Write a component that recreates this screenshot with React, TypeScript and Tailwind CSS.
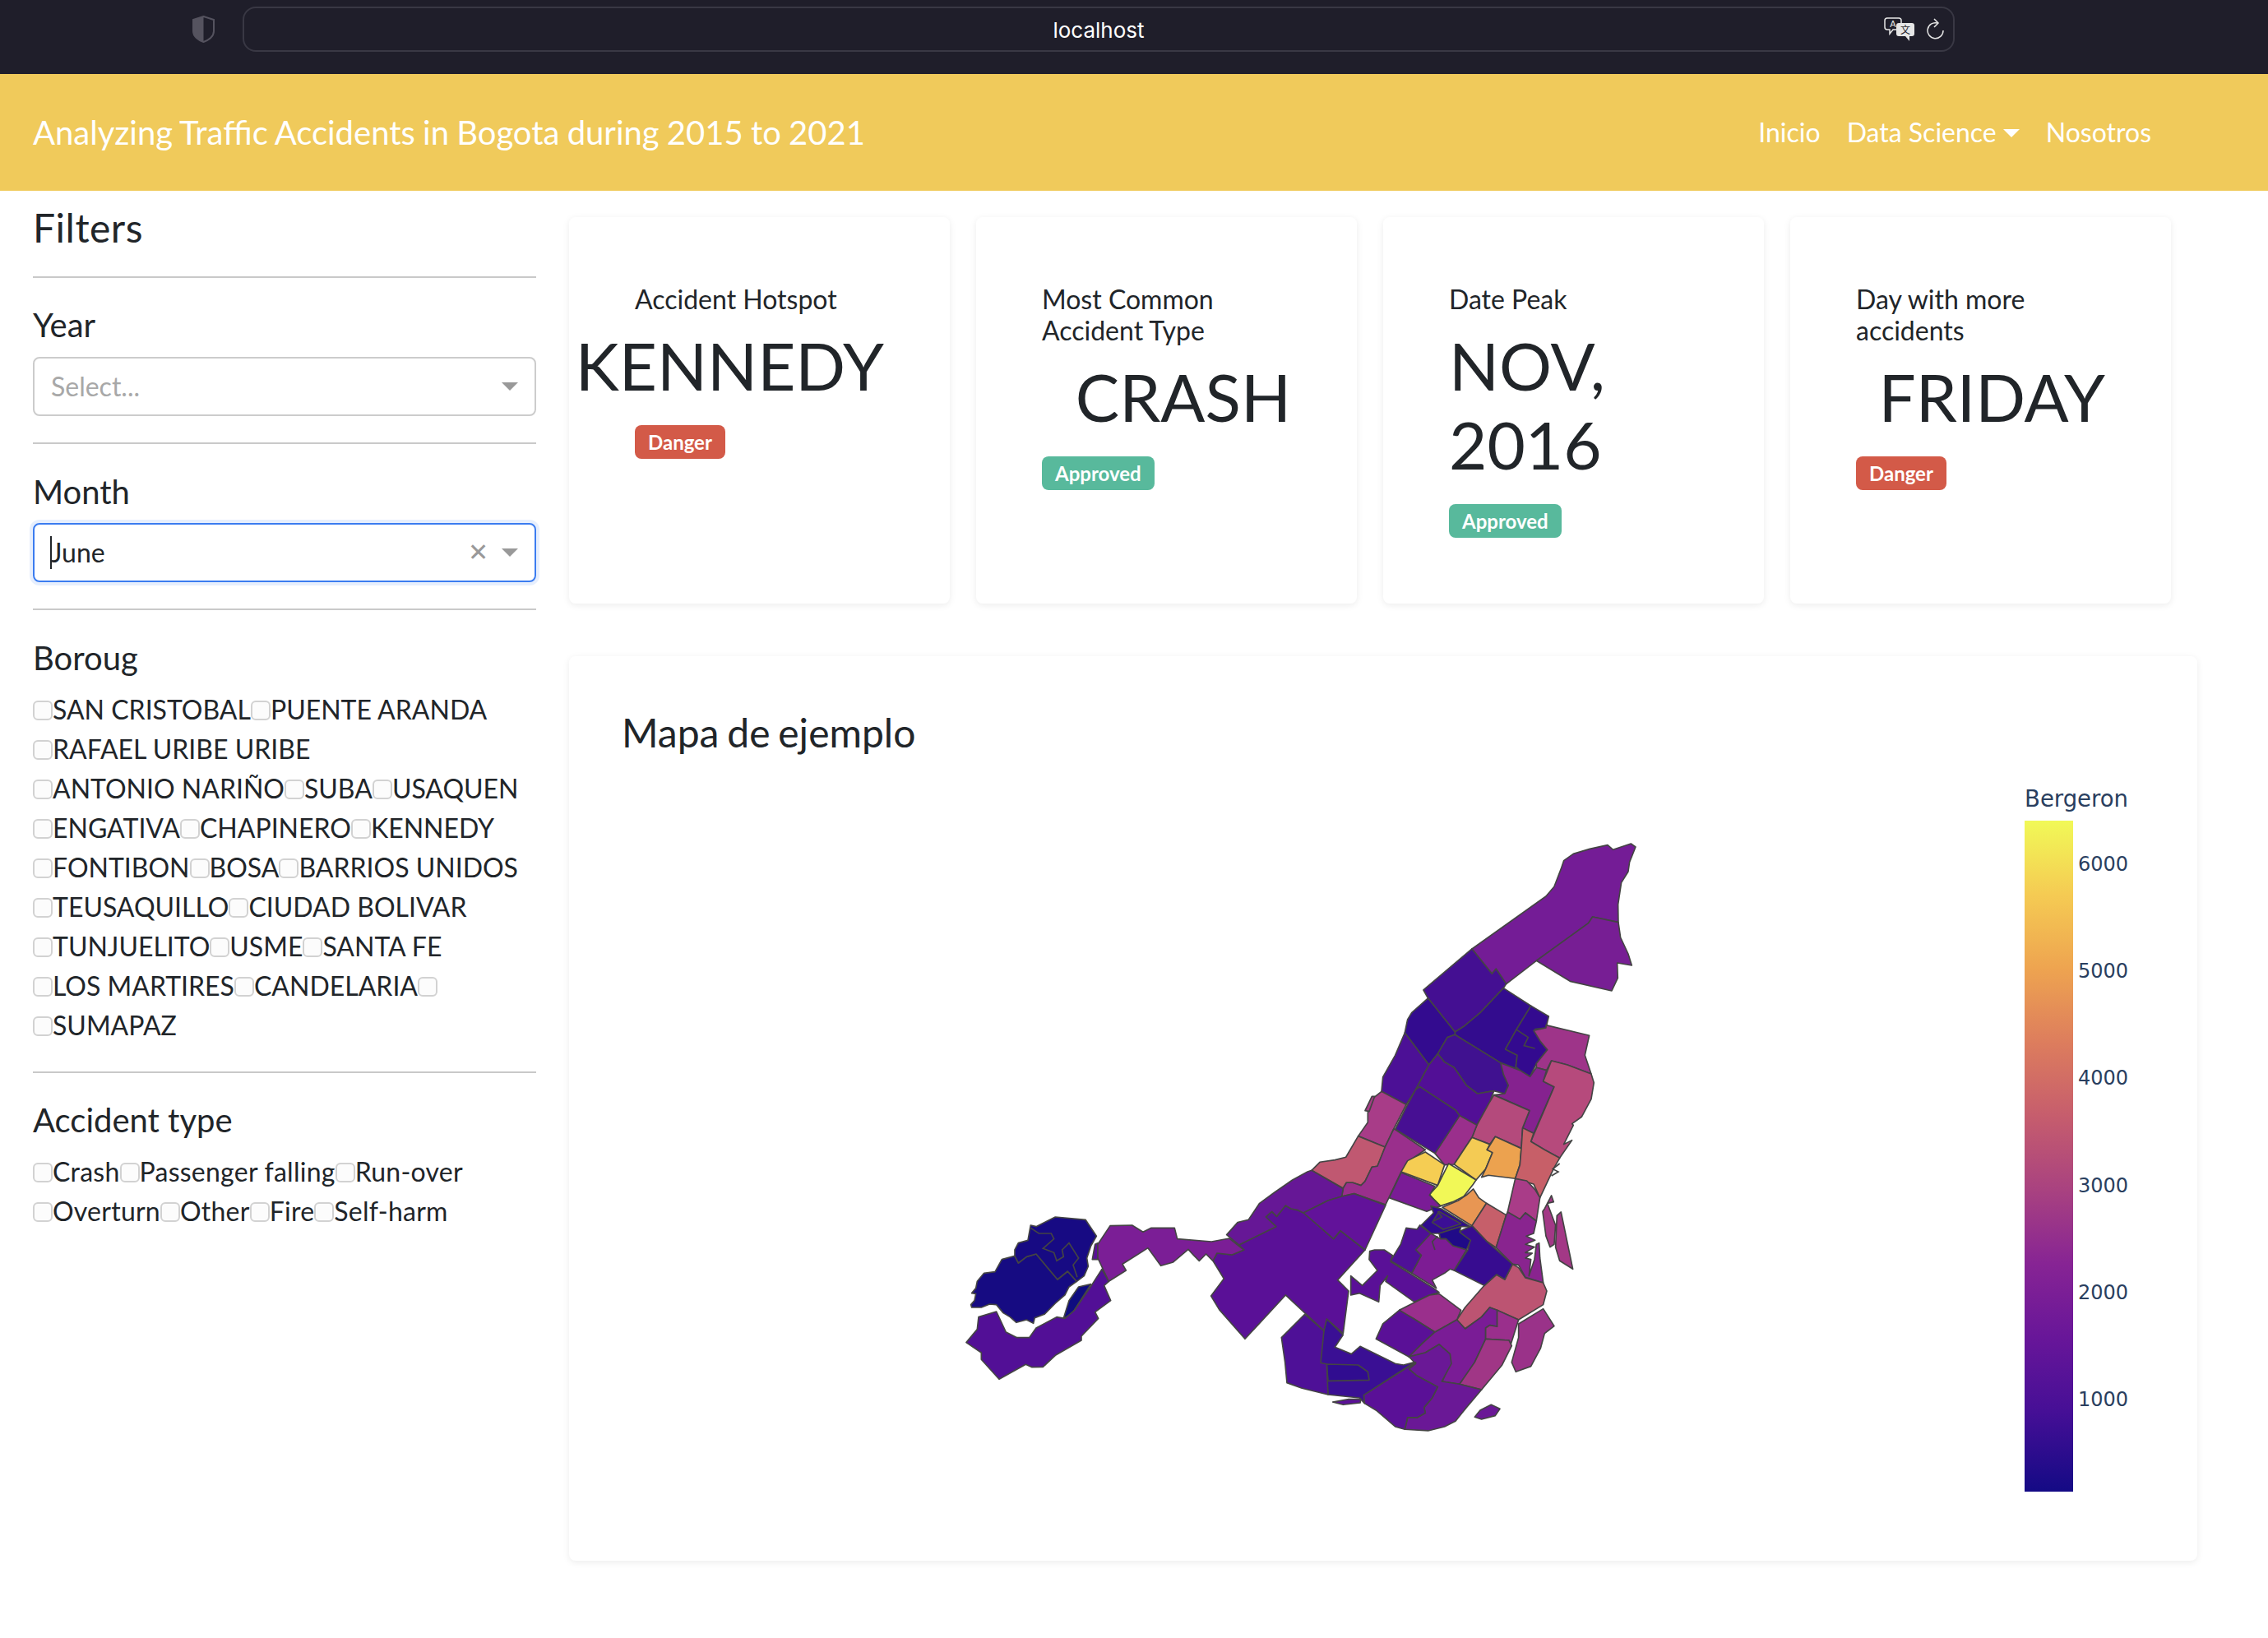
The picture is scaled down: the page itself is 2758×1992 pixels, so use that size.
const BOROUGHS = [
  "SAN CRISTOBAL", "PUENTE ARANDA", "RAFAEL URIBE URIBE", "ANTONIO NARIÑO", "SUBA", "USAQUEN",
  "ENGATIVA", "CHAPINERO", "KENNEDY", "FONTIBON", "BOSA", "BARRIOS UNIDOS", "TEUSAQUILLO",
  "CIUDAD BOLIVAR", "TUNJUELITO", "USME", "SANTA FE", "LOS MARTIRES", "CANDELARIA", "", "SUMAPAZ",
];
const ACCIDENT_TYPES = ["Crash", "Passenger falling", "Run-over", "Overturn", "Other", "Fire", "Self-harm"];

type Shape = [string, string];

// points read off the crops of the upper map (origin 1500,1000 at 3x)
const NORTH: Shape[] = [
  ["#741c96", "870,462 1140,270 1170,235 1195,170 1205,140 1240,115 1300,97 1365,83 1385,100 1450,78 1467,90 1445,145 1440,180 1415,220 1403,300 1404,365 1310,345 1295,368 1105,505 995,590 958,535 943,553"],
  ["#771e94", "1105,505 1295,368 1310,345 1404,365 1412,420 1440,480 1453,522 1400,513 1402,568 1380,615 1228,580"],
  ["#440f92", "693,612 870,462 943,553 958,535 995,590 985,605 900,695 840,745 808,765 710,642"],
  ["#330c8e", "985,605 1085,670 1030,760 992,828 1035,850 1030,892 1045,905 975,878 808,775 808,765 840,745 900,695"],
  ["#330a8f", "1085,670 1150,708 1140,750 1100,755 1105,775 1120,800 1145,830 1105,880 1082,928 1045,905 1030,892 1035,850 992,828 1030,760"],
  ["#9e3489", "1140,740 1298,778 1282,850 1305,918 1218,885 1160,870 1142,905 1105,895 1105,880 1145,830 1120,800 1095,760 1140,750"],
  ["#330b8f", "710,642 808,765 808,775 780,785 745,845 713,885 625,768 635,720 650,695"],
  ["#4c1096", "625,768 713,885 665,975 630,1030 540,982 545,930 590,850"],
  ["#401190", "745,845 780,785 808,775 975,878 985,920 1003,960 990,990 950,980 890,990 850,960 805,895 770,875"],
  ["#520f96", "745,845 770,875 805,895 850,960 890,990 950,980 935,1020 888,1105 825,1070 810,1050 680,965 665,975 713,885"],
  ["#85228f", "975,878 1045,905 1082,928 1105,895 1142,905 1130,945 1170,965 1095,1135 1055,1115 1080,1052 950,995 990,990 1003,960 985,920"],
  ["#b64a7c", "1160,870 1218,885 1305,918 1315,950 1305,1010 1270,1075 1235,1100 1240,1105 1205,1175 1235,1160 1190,1225 1135,1195 1085,1165 1170,965 1130,945"],
  ["#b44a7c", "950,995 1080,1052 1055,1115 1050,1190 955,1147 935,1175 870,1150 888,1105 935,1020"],
  ["#9a2f8c", "825,1070 888,1105 870,1150 805,1248 770,1250 735,1208"],
  ["#470f93", "680,965 810,1050 825,1070 735,1208 590,1120 630,1040 665,975"],
  ["#a83c88", "540,982 630,1030 585,1118 553,1185 455,1145 490,1095 490,1060 505,1010"],
  ["#a83c88", "480,1052 505,1000 515,1000 495,1055"],
  ["#c05871", "455,1145 553,1185 525,1255 505,1258 480,1310 465,1325 435,1315 412,1315 400,1335 285,1270 315,1240 370,1232 410,1222"],
  ["#9a2f8c", "585,1118 700,1195 660,1222 612,1275 555,1395 440,1355 395,1365 400,1335 412,1315 435,1315 465,1325 480,1310 505,1258 525,1255 553,1185"],
  ["#f5cd53", "700,1203 770,1250 745,1325 612,1275 635,1235 660,1222"],
  ["#f4cb54", "870,1150 935,1175 925,1195 945,1205 920,1265 885,1305 805,1248"],
  ["#eca24f", "955,1147 1050,1190 1045,1250 1028,1300 930,1288 905,1295 920,1265 945,1205 925,1195"],
  ["#c75f68", "1055,1115 1095,1135 1085,1165 1135,1195 1190,1225 1170,1260 1118,1370 1095,1320 1028,1300 1045,1250 1050,1190"],
  ["#f1f857", "785,1245 885,1305 875,1320 840,1365 800,1385 755,1400 735,1380 715,1358 745,1325"],
];

// lower map (origin 1500,1300 at 3x)
const SOUTH: Shape[] = [
  ["#7a1c96", "612,378 735,428 715,460 755,500 705,520 568,470"],
  ["#e89653", "875,438 895,470 923,490 870,572 762,505 820,480 850,460"],
  ["#c65f6a", "923,490 995,533 958,652 925,630 870,572"],
  ["#a93c88", "1028,400 1070,408 1100,440 1118,470 1105,555 1065,525 1045,548 1000,522"],
  ["#89248f", "1000,522 1045,548 1065,525 1105,555 1095,600 1068,610 1100,625 1065,640 1098,650 1065,670 1090,672 1065,690 1085,695 1078,755 1098,695 1105,640 1115,635 1118,690 1130,780 1065,760 1040,715 1018,712 958,652 995,533"],
  ["#bc5472", "1018,712 1040,725 1065,762 1130,780 1143,810 1130,860 1040,915 960,880 935,870 905,905 845,948 815,915 845,870 915,790 960,750 990,768"],
  ["#370c90", "870,572 925,630 1018,712 990,768 960,750 915,790 805,735 855,660 862,630 825,600 830,590"],
  ["#2f0b8e", "720,500 758,510 865,575 830,575 750,600 720,600 685,570 730,525"],
  ["#3b0f95", "725,560 750,520 830,565 765,585"],
  ["#200a88", "750,600 830,575 825,595 865,625 850,660 800,645 775,620 755,620"],
  ["#7d1c94", "720,600 755,620 775,620 800,645 850,660 805,735 790,730 770,745 725,770 740,800 650,745 685,680 665,660 700,595"],
  ["#4f1097", "630,580 670,585 680,570 720,600 665,660 685,680 650,745 573,700 610,640 620,610"],
  ["#5a1097", "497,665 515,660 550,660 580,680 573,703 730,800 750,815 715,825 660,850 555,775 562,755 535,790 530,850 460,818 428,825 428,755 470,790 525,735 495,695"],
  ["#9a2f8c", "605,880 660,852 715,825 750,820 830,880 815,915 735,960 655,910 625,895"],
  ["#5a1097", "605,880 655,910 735,960 690,1000 640,1050 520,985 545,930"],
  ["#7a1c96", "735,960 815,915 845,948 905,905 935,870 962,880 962,940 935,935 920,945 920,985 880,1070 825,1150 762,1140 790,1075 790,1040 750,1005 700,1035 640,1050 690,1000"],
  ["#9a2f8c", "962,880 1040,915 1010,1010 1005,990 920,985 920,945 935,935 962,940"],
  ["#a03686", "920,985 1005,990 1015,1010 980,1080 905,1170 825,1150 880,1070"],
  ["#9a3289", "1130,875 1170,938 1135,965 1120,1020 1085,1085 1030,1105 1015,1070 1040,980 1040,930"],
  ["#a33886", "1135,510 1160,462 1168,485 1145,490 1175,570 1170,640 1155,650 1140,610 1128,520"],
  ["#a33886", "1180,535 1195,522 1238,730 1190,700 1175,650"],
  ["#6a1896", "880,1270 900,1245 940,1225 972,1240 955,1265 905,1278"],
  ["#6a1896", "760,1140 825,1150 905,1170 850,1235 810,1285 770,1305 710,1320 625,1315 635,1272 670,1272 700,1255 695,1235 725,1200 745,1160 670,1120 640,1095 665,1075 640,1050 700,1035 750,1005 790,1040 795,1075"],
  ["#5a1097", "665,1070 640,1095 670,1120 745,1160 725,1200 695,1235 700,1255 670,1272 635,1272 625,1315 590,1305 520,1245 478,1220 475,1190"],
  ["#3a0f94", "340,912 400,970 370,1015 430,1040 462,1012 590,1075 620,1080 660,1070 475,1190 478,1220 460,1200 345,1188 340,1135 318,1072 318,1000"],
  ["#300c90", "340,1077 455,1080 490,1105 495,1135 345,1138"],
  ["#4e1097", "260,895 330,955 318,1072 340,1077 345,1188 250,1165 195,1145 188,1070 175,980"],
  ["#5a1097", "362,1215 420,1205 465,1205 462,1218 400,1225"],
  ["#5a1097", "155,575 118,540 140,520 158,538 190,498 210,510 235,515 258,525 365,620 390,590 480,660 380,770 420,810 400,965 340,912 330,955 190,825 42,985 -52,878 -82,828 -35,765 -75,700 -60,672 -5,678 38,660 20,642"],
  ["#661796", "285,370 400,437 395,465 345,480 255,525 235,515 210,510 190,498 158,538 140,520 118,540 155,575 20,642 -25,605 15,560 55,550 95,490 150,450 215,405 270,375"],
  ["#62129a", "255,525 345,480 395,465 440,455 555,497 480,660 390,590 365,620"],
];

const SOUTH_LINES = [
  "1190,345 1165,365 1185,375 1160,390",
  "735,660 725,630 745,610",
  "745,520 760,540 730,555",
];

// west end of the map (origin 1160,1450 at 3x)
const WEST: Shape[] = [
  ["#160b82", "65,420 62,410 75,395 80,370 65,368 80,350 85,325 110,295 150,290 175,245 222,232 235,258 265,235 300,225 378,318 415,288 448,325 420,345 405,375 370,405 330,445 295,458 290,478 265,465 228,475 205,455 180,440 155,410 130,408 100,420"],
  ["#170a83", "222,232 222,210 235,185 270,175 280,120 300,125 340,105 370,90 480,100 520,160 500,195 485,240 490,270 475,305 448,325 415,288 378,318 300,225 265,235 235,258"],
  ["#0f0c80", "500,335 430,445 400,460 420,395 455,345"],
  ["#520f96", "45,548 85,500 90,455 155,435 190,510 230,530 275,530 300,495 375,455 405,460 440,430 505,335 540,280 565,325 548,340 572,395 515,437 527,460 465,525 465,540 370,595 325,637 285,638 262,628 165,682 100,610 100,585"],
  ["#5a1097", "505,245 515,190 525,185 525,245"],
  ["#7b1e96", "525,190 570,122 650,120 690,145 720,130 805,130 815,170 940,180 1005,168 1058,210 1015,228 960,222 945,250 920,225 895,250 875,230 855,208 800,255 755,268 708,203 615,262 628,285 565,325 525,240"],
];

const TICKS: [string, number][] = [
  ["6000", 1050],
  ["5000", 1180],
  ["4000", 1310],
  ["3000", 1441],
  ["2000", 1571],
  ["1000", 1701],
];

function Polys({ shapes, transform }: { shapes: Shape[]; transform: string }) {
  return (
    <g transform={transform} stroke="#444444" strokeWidth={5} strokeLinejoin="round" fill="none">
      {shapes.map(([fill, points], i) => (
        <polygon key={i} fill={fill} points={points} />
      ))}
    </g>
  );
}

function MapChart() {
  return (
    <svg className="mt-[10px] block h-[940px] w-[1864px]" viewBox="756 930 1864 940">
      <defs>
        <linearGradient id="plasma" x1="0" y1="0" x2="0" y2="1">
          <stop offset="0" stopColor="#f1f957" />
          <stop offset="0.11" stopColor="#f5cb53" />
          <stop offset="0.22" stopColor="#eea450" />
          <stop offset="0.33" stopColor="#dd7d5d" />
          <stop offset="0.44" stopColor="#c65d6d" />
          <stop offset="0.55" stopColor="#a94280" />
          <stop offset="0.66" stopColor="#872494" />
          <stop offset="0.77" stopColor="#681699" />
          <stop offset="0.88" stopColor="#460f96" />
          <stop offset="1" stopColor="#140a85" />
        </linearGradient>
      </defs>
      <Polys shapes={NORTH} transform="translate(1500 1000) scale(0.3333)" />
      <Polys shapes={SOUTH} transform="translate(1500 1300) scale(0.3333)" />
      <g transform="translate(1500 1300) scale(0.3333)" stroke="#444444" strokeWidth={5} fill="none">
        {SOUTH_LINES.map((points, i) => (
          <polyline key={i} points={points} />
        ))}
      </g>
      <g transform="translate(1500 1000) scale(0.3333)" stroke="#444444" strokeWidth={5} fill="none">
        <polyline points="1030,755 1075,785 1060,815 1100,825" />
      </g>
      <Polys shapes={WEST} transform="translate(1160 1450) scale(0.3333)" />
      <g transform="translate(1160 1450) scale(0.3333)" stroke="#444444" strokeWidth={5} fill="none">
        <polyline points="280,130 310,150 355,150 365,170 325,205 365,220 375,250 400,235 395,210 420,185 455,240 435,265 450,310" />
      </g>
      <rect x={2462} y={998} width={59} height={816} fill="url(#plasma)" />
      <text x={2588} y={981} textAnchor="end" fontFamily="'DejaVu Sans', sans-serif" fontSize={27.5} fill="#2a3f5f">
        Bergeron
      </text>
      {TICKS.map(([label, y]) => (
        <text key={label} x={2588} y={y + 9} textAnchor="end" fontFamily="'DejaVu Sans', sans-serif" fontSize={24} fill="#2a3f5f">
          {label}
        </text>
      ))}
    </svg>
  );
}

function BrowserBar() {
  return (
    <div className="flex h-[90px] items-start bg-[#1f1e2a] pl-[234px] pt-[8px]">
      <svg className="mt-[11px] h-[33px] w-[27px]" viewBox="0 0 27 33">
        <path d="M13.5 1 L26 5 V19 C26 25 20 30 13.5 32 C7 30 1 25 1 19 V5 Z" fill="none" stroke="#55535f" strokeWidth="2" />
        <path d="M13.5 1 L1 5 V19 C1 25 7 30 13.5 32 Z" fill="#55535f" />
      </svg>
      <div className="ml-[34px] grid h-[55px] w-[2082px] grid-cols-[1fr_auto_1fr] items-center rounded-[16px] border-[2px] border-[#393844]">
        <span />
        <span className="mt-[2px] font-['Inter',sans-serif] text-[26px] text-white">localhost</span>
        <div className="flex items-center justify-end gap-[14px] pr-[10px]">
          <svg className="h-[30px] w-[38px]" viewBox="0 0 38 30">
            <path d="M4 1 H18 C20 1 21 2 21 4 V12 C21 14 20 15 18 15 H11 L7 20 V15 H4 C2 15 1 14 1 12 V4 C1 2 2 1 4 1 Z" fill="none" stroke="#e6e6e6" strokeWidth="1.5" />
            <text x="11" y="12" textAnchor="middle" fontSize="11" fontFamily="'Liberation Sans', sans-serif" fill="#e6e6e6">A</text>
            <path d="M18 7 H34 C36 7 37 8 37 10 V20 C37 22 36 23 34 23 H31 V29 L26 23 H18 C16 23 15 22 15 20 V10 C15 8 16 7 18 7 Z" fill="#e6e6e6" />
            <text x="26" y="20" textAnchor="middle" fontSize="12" fontFamily="'Noto Sans CJK SC', sans-serif" fill="#1f1e2a">文</text>
          </svg>
          <svg className="h-[28px] w-[22px]" viewBox="0 0 22 28" fill="none" stroke="#e6e6e6" strokeWidth="1.5">
            <path d="M13 6 A9.5 9.5 0 1 0 20 15" />
            <path d="M9 1 L14 6 L9 11" />
          </svg>
        </div>
      </div>
    </div>
  );
}

function Navbar() {
  return (
    <nav className="flex h-[142px] items-center justify-between bg-[#f0ca5b] pl-[40px] pr-[142px] text-white">
      <span className="text-[40px] leading-[60px] [word-spacing:-1px]">
        Analyzing Traffic Accidents in Bogota during 2015 to 2021
      </span>
      <div className="flex items-center gap-[32px] text-[32px]">
        <a>Inicio</a>
        <a className="flex items-center">
          Data Science
          <span className="ml-[8px] mt-[2px] h-0 w-0 border-x-[10px] border-t-[10px] border-x-transparent border-t-white" />
        </a>
        <a>Nosotros</a>
      </div>
    </nav>
  );
}

function Check({ label }: { label: string }) {
  return (
    <label className="flex items-start text-[32px] leading-[48px] text-[#212529]">
      <input
        type="checkbox"
        readOnly
        className="mt-[13px] h-[24px] w-[24px] appearance-none rounded-[6px] border-[2px] border-[#d2d2d2] bg-[#fcfcfc]"
      />
      {label}
    </label>
  );
}

function Hr({ className }: { className: string }) {
  return <hr className={`h-[2px] border-0 bg-[#c9c9c9] ${className}`} />;
}

function Sidebar() {
  return (
    <aside className="w-[692px] shrink-0 pl-[40px] pr-[40px] pt-[16px] text-[#212529]">
      <h4 className="text-[48px] leading-[58px] tracking-[0.5px]">Filters</h4>
      <Hr className="mt-[30px]" />
      <h5 className="mt-[33px] text-[40px] leading-[48px]">Year</h5>
      <div className="mt-[15px] flex h-[72px] items-center justify-between rounded-[8px] border-[2px] border-[#cccccc] pl-[20px] pr-[20px] text-[32px] text-[#a8a8a8]">
        <span>Select...</span>
        <span className="h-0 w-0 border-x-[10px] border-t-[10px] border-x-transparent border-t-[#999999]" />
      </div>
      <Hr className="mt-[32px]" />
      <h5 className="mt-[34px] text-[40px] leading-[48px]">Month</h5>
      <div className="mt-[14px] flex h-[72px] items-center justify-between rounded-[8px] border-[2px] border-[#3b7cf0] pl-[19px] pr-[20px] text-[32px] shadow-[0_0_0_4px_rgba(59,124,240,0.12)]">
        <span className="flex items-center">
          <span className="h-[40px] w-[2px] bg-[#212529]" />
          <span className="ml-[-1px]">June</span>
        </span>
        <span className="flex items-center gap-[16px]">
          <span className="font-['Liberation_Sans',sans-serif] text-[30px] leading-none text-[#999999]">✕</span>
          <span className="h-0 w-0 border-x-[10px] border-t-[10px] border-x-transparent border-t-[#999999]" />
        </span>
      </div>
      <Hr className="mt-[32px]" />
      <h5 className="mt-[34px] text-[40px] leading-[48px]">Boroug</h5>
      <div className="mt-[15px] flex flex-wrap">
        {BOROUGHS.map((b, i) => (
          <Check key={i} label={b} />
        ))}
      </div>
      <Hr className="mt-[32px]" />
      <h5 className="mt-[33px] text-[40px] leading-[48px]">Accident type</h5>
      <div className="mt-[15px] flex flex-wrap tracking-[0.25px]">
        {ACCIDENT_TYPES.map((t) => (
          <Check key={t} label={t} />
        ))}
      </div>
    </aside>
  );
}

function StatCard({
  title,
  value,
  badge,
  align,
}: {
  title: string;
  value: string;
  badge: "Danger" | "Approved";
  align: "left" | "right";
}) {
  return (
    <div className="h-[470px] rounded-[8px] bg-white px-[80px] pt-[81px] text-[#212529] shadow-[0_2px_8px_rgba(0,0,0,0.08)]">
      <p className="text-[32px] leading-[38px]">{title}</p>
      <h1
        className={
          align === "right"
            ? "mt-[13px] flex justify-end whitespace-nowrap text-[80px] leading-[96px]"
            : "mt-[13px] w-[260px] text-[80px] leading-[96px]"
        }
      >
        {value}
      </h1>
      <span
        className={
          badge === "Danger"
            ? "mt-[25px] inline-block rounded-[8px] bg-[#d35a48] px-[16px] py-[6px] text-[24px] font-bold leading-[29px] text-white"
            : "mt-[25px] inline-block rounded-[8px] bg-[#58b99c] px-[16px] py-[6px] text-[24px] font-bold leading-[29px] text-white"
        }
      >
        {badge}
      </span>
    </div>
  );
}

export default function App() {
  return (
    <div className="min-h-[1992px] w-[2758px] bg-white font-['Lato',sans-serif]">
      <BrowserBar />
      <Navbar />
      <div className="flex">
        <Sidebar />
        <main className="w-[1980px] pt-[32px]">
          <div className="grid grid-cols-[repeat(4,463px)] gap-[32px]">
            <StatCard title="Accident Hotspot" value="KENNEDY" badge="Danger" align="right" />
            <StatCard title="Most Common Accident Type" value="CRASH" badge="Approved" align="right" />
            <StatCard title="Date Peak" value="NOV, 2016" badge="Approved" align="left" />
            <StatCard title="Day with more accidents" value="FRIDAY" badge="Danger" align="right" />
          </div>
          <section className="mt-[64px] h-[1100px] rounded-[8px] bg-white pl-[64px] pt-[64px] shadow-[0_2px_8px_rgba(0,0,0,0.08)]">
            <h4 className="text-[48px] leading-[58px] text-[#212529] [word-spacing:-2.5px]">Mapa de ejemplo</h4>
            <MapChart />
          </section>
        </main>
      </div>
    </div>
  );
}
